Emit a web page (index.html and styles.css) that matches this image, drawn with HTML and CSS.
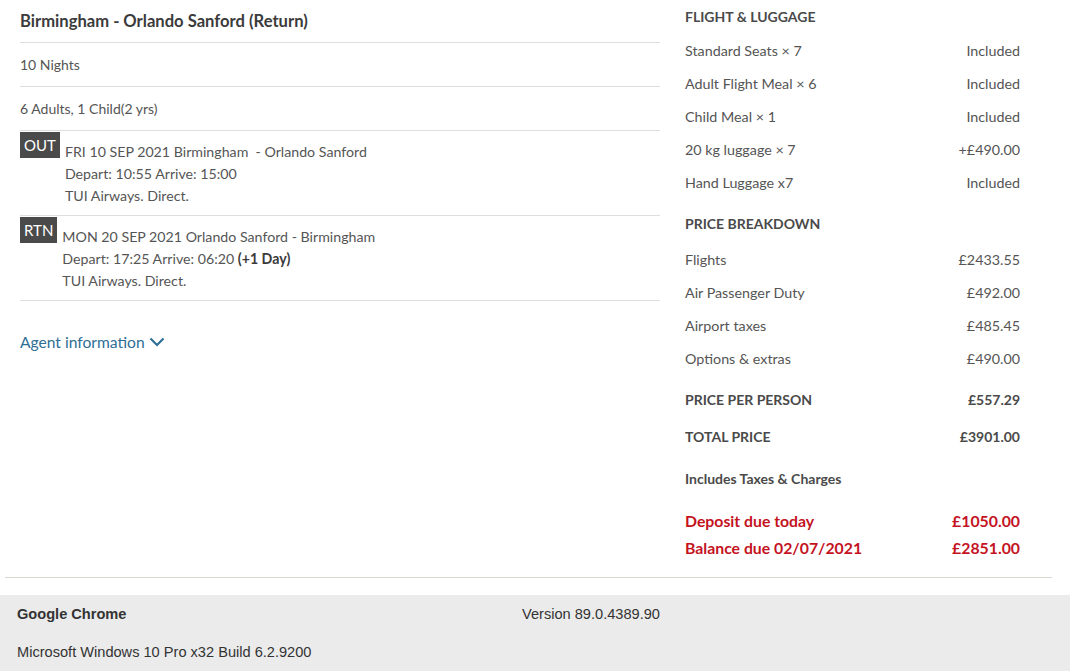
FILE: index.html
```html
<!DOCTYPE html>
<html lang="en">
<head>
<meta charset="utf-8">
<title>Booking summary</title>
<link rel="stylesheet" href="styles.css">
</head>
<body>
<div class="summary">
  <div class="left">
    <div class="row-title">Birmingham - Orlando Sanford (Return)</div>
    <div class="row-info">10 Nights</div>
    <div class="row-info">6 Adults, 1 Child(2 yrs)</div>
    <div class="segment">
      <span class="badge">OUT</span>
      <div class="seg-text">
        <div>FRI 10 SEP 2021 Birmingham &nbsp;- Orlando Sanford</div>
        <div>Depart: 10:55 Arrive: 15:00</div>
        <div>TUI Airways. Direct.</div>
      </div>
    </div>
    <div class="segment">
      <span class="badge">RTN</span>
      <div class="seg-text">
        <div>MON 20 SEP 2021 Orlando Sanford - Birmingham</div>
        <div>Depart: 17:25 Arrive: 06:20 <b>(+1 Day)</b></div>
        <div>TUI Airways. Direct.</div>
      </div>
    </div>
    <a class="agent" href="#">Agent information
      <svg class="chev" width="16" height="10" viewBox="0 0 16 10"><path d="M1.5 1.5 L8 8 L14.5 1.5" fill="none" stroke="currentColor" stroke-width="2.2"/></svg>
    </a>
  </div>
  <div class="right">
    <div class="sec-title">FLIGHT &amp; LUGGAGE</div>
    <div class="line first"><span>Standard Seats × 7</span><span>Included</span></div>
    <div class="line"><span>Adult Flight Meal × 6</span><span>Included</span></div>
    <div class="line"><span>Child Meal × 1</span><span>Included</span></div>
    <div class="line"><span>20 kg luggage × 7</span><span>+£490.00</span></div>
    <div class="line"><span>Hand Luggage x7</span><span>Included</span></div>
    <div class="sec-title gap">PRICE BREAKDOWN</div>
    <div class="line pb"><span>Flights</span><span>£2433.55</span></div>
    <div class="line"><span>Air Passenger Duty</span><span>£492.00</span></div>
    <div class="line"><span>Airport taxes</span><span>£485.45</span></div>
    <div class="line"><span>Options &amp; extras</span><span>£490.00</span></div>
    <div class="total pp"><span>PRICE PER PERSON</span><span class="amt">£557.29</span></div>
    <div class="total tp"><span>TOTAL PRICE</span><span class="amt">£3901.00</span></div>
    <div class="includes">Includes Taxes &amp; Charges</div>
    <div class="due deposit"><span>Deposit due today</span><span>£1050.00</span></div>
    <div class="due balance"><span>Balance due 02/07/2021</span><span>£2851.00</span></div>
  </div>
</div>
<div class="sysinfo">
  <div class="sys-row"><span class="browser">Google Chrome</span><span class="version">Version 89.0.4389.90</span></div>
  <div class="sys-row">Microsoft Windows 10 Pro x32 Build 6.2.9200</div>
</div>
</body>
</html>
```

FILE: styles.css
```css
* { box-sizing: border-box; }
html, body { margin: 0; padding: 0; background: #fff; }
body {
  font-family: Lato, "Open Sans", sans-serif;
  color: #555;
  font-size: 14px;
}

.summary {
  display: flex;
  margin: 0 18px 0 5px;
  padding: 0 0 16px 15px;
  border-bottom: 1px solid #d9d6cf;
}

.left { width: 640px; }
.right { width: 335px; margin-left: 25px; }

.row-title {
  height: 43px;
  line-height: 42px;
  font-weight: 700;
  font-size: 16.6px;
  color: #3b3b3b;
  border-bottom: 1px solid #ddd;
}
.row-info {
  height: 44px;
  line-height: 44px;
  border-bottom: 1px solid #ddd;
}

.segment {
  display: flex;
  align-items: flex-start;
  padding: 1px 0 8px;
  border-bottom: 1px solid #ddd;
}
.badge {
  background: #4a4a4a;
  color: #fff;
  font-size: 15px;
  height: 26px;
  line-height: 26px;
  padding: 0 4px;
}
.seg-text {
  margin: 9px 0 0 5px;
  line-height: 22px;
  font-size: 14.2px;
}
.seg-text b { color: #3b3b3b; }

.agent {
  display: inline-flex;
  align-items: center;
  margin-top: 30px;
  color: #2f6f95;
  text-decoration: none;
  font-size: 15.6px;
  line-height: 22px;
}
.chev { margin-left: 4px; }

.sec-title {
  line-height: 34px;
  font-weight: 700;
  color: #4a4a4a;
}
.sec-title.gap { margin-top: 8px; }

.line {
  display: flex;
  justify-content: space-between;
  line-height: 33px;
  font-size: 14.3px;
}
.line.pb { margin-top: 2px; }

.total {
  display: flex;
  justify-content: space-between;
  line-height: 34px;
  font-weight: 700;
  color: #4a4a4a;
}
.total.pp { margin-top: 8px; }
.total.tp { margin-top: 3px; }

.includes {
  margin-top: 8px;
  line-height: 34px;
  font-weight: 700;
  color: #4a4a4a;
}

.due {
  display: flex;
  justify-content: space-between;
  font-weight: 700;
  color: #c4131f;
  font-size: 15.8px;
}
.due.deposit { margin-top: 12px; line-height: 26px; }
.due.balance { line-height: 27px; }

.sysinfo {
  margin-top: 17px;
  background: #ebebeb;
  padding: 0 17px;
  font-family: "Liberation Sans", Arial, sans-serif;
  font-size: 14.6px;
  color: #333;
  height: 76px;
}
.sys-row {
  display: flex;
  line-height: 38px;
}
.browser { font-weight: 700; width: 505px; }
```
